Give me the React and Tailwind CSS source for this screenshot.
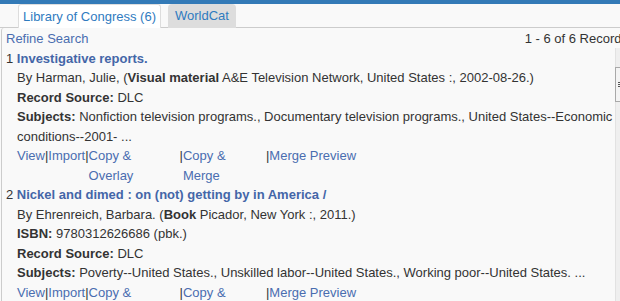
// Record search results — Library of Congress / WorldCat tabs with a short result list.

const records = [
  {
    n: 1,
    title: 'Investigative reports.',
    by: 'By Harman, Julie, (',
    type: 'Visual material',
    pub: ' A&E Television Network, United States :, 2002-08-26.)',
    isbn: null,
    source: 'DLC',
    subjects:
      'Nonfiction television programs., Documentary television programs., United States--Economic conditions--2001- ...',
  },
  {
    n: 2,
    title: 'Nickel and dimed : on (not) getting by in America /',
    by: 'By Ehrenreich, Barbara. (',
    type: 'Book',
    pub: ' Picador, New York :, 2011.)',
    isbn: '9780312626686 (pbk.)',
    source: 'DLC',
    subjects: 'Poverty--United States., Unskilled labor--United States., Working poor--United States. ...',
  },
]

function Actions() {
  const sep = <span className="text-[#333]">|</span>
  return (
    <div className="flex items-start text-[#4a6db0]">
      <span>View</span>
      {sep}
      <span>Import</span>
      {sep}
      <span className="w-[91px]">Copy &amp; Overlay</span>
      {sep}
      <span className="w-[83px]">Copy &amp; Merge</span>
      {sep}
      <span>Merge Preview</span>
    </div>
  )
}

function Record({ r }) {
  return (
    <div>
      <div className="whitespace-nowrap">
        {r.n}{' '}
        <span className="font-bold text-[#4466a8]">{r.title}</span>
      </div>
      <div className="pl-[11px]">
        <div className="whitespace-nowrap">
          {r.by}
          <span className="font-bold">{r.type}</span>
          {r.pub}
        </div>
        {r.isbn && (
          <div>
            <span className="font-bold">ISBN:</span> {r.isbn}
          </div>
        )}
        <div>
          <span className="font-bold">Record Source:</span> {r.source}
        </div>
        <div className="pr-[6px]">
          <span className="font-bold">Subjects:</span> {r.subjects}
        </div>
        <Actions />
      </div>
    </div>
  )
}

export default function App() {
  return (
    <div
      className="relative w-[620px] h-[301px] overflow-hidden bg-[#f9f9f9] text-[13px] leading-[19.5px] text-[#333]"
      style={{ fontFamily: '"Liberation Sans", Arial, sans-serif' }}
    >
      <div className="h-[4px] bg-[#337ab7]" />

      {/* tabs */}
      <div className="flex items-end h-[24px] border-b border-[#ccc]">
        <div className="ml-[18px] mb-[-1px] h-[24px] w-[143px] flex items-center justify-center bg-white border border-b-0 border-[#ddd] rounded-t-[3px] text-[#2f7bbf]">
          Library of Congress (6)
        </div>
        <div className="ml-[7px] mb-[-1px] h-[24px] w-[68px] flex items-center justify-center bg-[#dddddd] rounded-t-[4px] text-[#2f7bbf]">
          WorldCat
        </div>
      </div>

      {/* results panel */}
      <div className="ml-[1px] pl-[4px] pt-[1px] border-l border-[#ccc] rounded-tl-[3px] h-full">
        <div className="flex justify-between mr-[-8px] whitespace-nowrap">
          <span className="text-[#4a6db0]">Refine Search</span>
          <span>1 - 6 of 6 Records</span>
        </div>
        {records.map((r) => (
          <Record key={r.n} r={r} />
        ))}
      </div>

      {/* sidebar splitter */}
      <div className="absolute right-0 top-[48px] bottom-0 w-[5px] bg-[#efefef] border-l border-[#e2e2e2]">
        <div className="absolute left-[-1px] top-[19px] h-[35px] w-[6px] border border-r-0 border-[#a9a9a9] bg-[#f4f4f4] flex flex-col items-center justify-center gap-[1px]">
          <span className="block w-[2px] h-[1px] bg-[#555]" />
          <span className="block w-[2px] h-[1px] bg-[#555]" />
          <span className="block w-[2px] h-[1px] bg-[#555]" />
        </div>
      </div>
    </div>
  )
}
